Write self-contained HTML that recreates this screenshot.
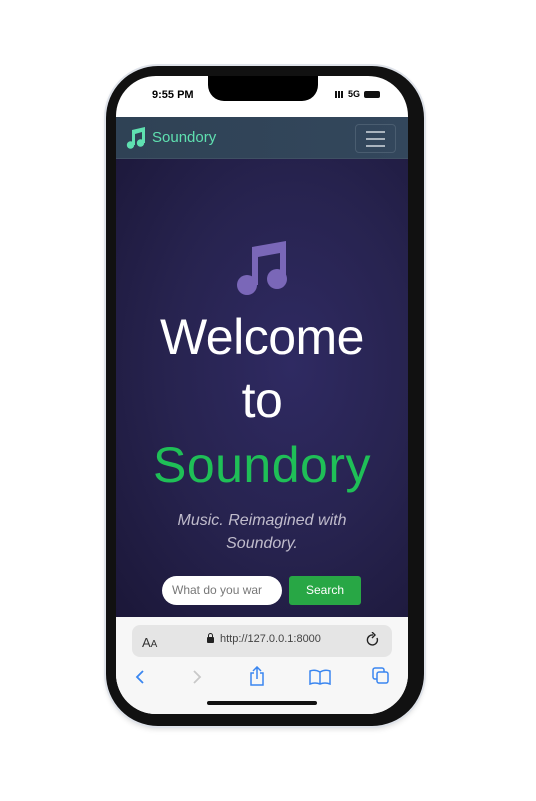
<!DOCTYPE html>
<html><head><meta charset="utf-8"><style>
*{margin:0;padding:0;box-sizing:border-box}
body{width:536px;height:801px;background:#fff;position:relative;overflow:hidden;font-family:"Liberation Sans",sans-serif}
.frame{position:absolute;left:106px;top:66px;width:318px;height:660px;border-radius:52px;background:#111;box-shadow:0 0 0 2px #dfe3ea,0 3px 6px rgba(0,0,0,.15)}
.screen{position:absolute;left:116px;top:76px;width:292px;height:638px;border-radius:40px;overflow:hidden;background:#fff}
.notch{position:absolute;left:92px;top:0;width:110px;height:25px;background:#000;border-radius:0 0 16px 16px}
.a{position:absolute}
.nav{left:0;top:41px;width:292px;height:42px;background:linear-gradient(90deg,#2f4255,#33475c);border-bottom:1px solid #3f5063}
.hero{left:0;top:83px;width:292px;height:458px;background:radial-gradient(ellipse at 60% 45%,#2f2a62 0%,#27234f 50%,#1b1738 100%)}
.w{width:292px;text-align:center;color:#fff;font-size:50px;letter-spacing:-0.5px;font-weight:normal;line-height:64px}
.bar{left:0;top:541px;width:292px;height:97px;background:#f7f7f7}
</style></head><body>
<div class="frame"></div>
<div class="screen">
 <div class="notch"></div>
 <div class="a" style="left:36px;top:13px;font-size:11px;font-weight:bold">9:55 PM</div>
 <div class="a" style="left:219px;top:15px;width:10px;height:7px;background:linear-gradient(90deg,#111 0 2px,transparent 2px 3px,#111 3px 5px,transparent 5px 6px,#111 6px 8px,transparent 8px)"></div>
 <div class="a" style="left:232px;top:13px;font-size:9px;font-weight:bold">5G</div>
 <div class="a" style="left:248px;top:15px;width:16px;height:7px;background:#111;border-radius:2px"></div>
 <div class="a nav">
  <svg class="a" style="left:10px;top:10px" width="20" height="22" viewBox="0 0 20 22"><path d="M6 3 L19 0 V16 H16 V5 L9 7 V18 H6 Z" fill="#5fe0b0"/><circle cx="4.5" cy="18" r="3.7" fill="#5fe0b0"/><circle cx="14.5" cy="16" r="3.7" fill="#5fe0b0"/></svg>
  <div class="a" style="left:36px;top:12px;color:#5fe0b0;font-size:15px">Soundory</div>
  <div class="a" style="left:239px;top:7px;width:41px;height:29px;border:1px solid #4a5d70;border-radius:4px"></div>
  <div class="a" style="left:250px;top:14px;width:19px;height:2px;background:#aab4be;box-shadow:0 7px 0 #aab4be,0 14px 0 #aab4be"></div>
 </div>
 <div class="a hero">
  <svg class="a" style="left:119px;top:82px" width="54" height="56" viewBox="0 0 54 56"><path d="M17 6 L51 0 V40 H45 V12 L23 16 V44 H17 Z" fill="#7a67b8"/><circle cx="12" cy="44" r="10" fill="#7a67b8"/><circle cx="42" cy="38" r="10" fill="#7a67b8"/></svg>
  <div class="a w" style="top:146px">Welcome</div>
  <div class="a w" style="top:209px">to</div>
  <div class="a w" style="top:274px;color:#1fbf57;letter-spacing:0.5px">Soundory</div>
  <div class="a" style="top:350px;left:40px;width:212px;text-align:center;color:#c0bccc;font-style:italic;font-size:16px;line-height:23px">Music. Reimagined with Soundory.</div>
  <div class="a" style="left:46px;top:417px;width:120px;height:29px;background:#fff;border-radius:15px;color:#777;font-size:12px;padding:7px 10px;white-space:nowrap;overflow:hidden">What do you war</div>
  <div class="a" style="left:173px;top:417px;width:72px;height:29px;background:#28a745;border-radius:3px;color:#fff;font-size:12px;text-align:center;line-height:29px">Search</div>
 </div>
 <div class="a bar">
  <div class="a" style="left:16px;top:8px;width:260px;height:32px;background:#e5e5e5;border-radius:8px"></div>
  <div class="a" style="left:26px;top:18px;font-size:13px;color:#333">A<span style="font-size:10px">A</span></div>
  <div class="a" style="left:91px;top:20px;width:7px;height:6px;background:#222;border-radius:1px"></div>
  <div class="a" style="left:92px;top:16px;width:5px;height:6px;border:1.3px solid #222;border-radius:3px 3px 0 0"></div>
  <div class="a" style="left:104px;top:16px;font-size:11px;color:#444">http://127.0.0.1:8000</div>
  <svg class="a" style="left:250px;top:15px" width="14" height="15" viewBox="0 0 14 15"><path d="M11 6 A5 5 0 1 1 7 3" fill="none" stroke="#222" stroke-width="1.4"/><path d="M6 0 L9 3 L6 6" fill="none" stroke="#222" stroke-width="1.4"/></svg>
  <svg class="a" style="left:18px;top:52px" width="12" height="16"><path d="M9 2 L3 8 L9 14" fill="none" stroke="#3a86f0" stroke-width="1.8"/></svg>
  <svg class="a" style="left:75px;top:52px" width="12" height="16"><path d="M3 2 L9 8 L3 14" fill="none" stroke="#c8c8c8" stroke-width="1.8"/></svg>
  <svg class="a" style="left:132px;top:49px" width="18" height="20"><path d="M6 7 H3 V19 H15 V7 H12 M9 13 V1 M5 5 L9 1 L13 5" fill="none" stroke="#3a86f0" stroke-width="1.5"/></svg>
  <svg class="a" style="left:193px;top:52px" width="22" height="16"><path d="M11 3 Q6 0 1 2 V15 Q6 13 11 15 Q16 13 21 15 V2 Q16 0 11 3 V15" fill="none" stroke="#3a86f0" stroke-width="1.5"/></svg>
  <svg class="a" style="left:256px;top:50px" width="18" height="18"><rect x="1" y="1" width="11" height="11" rx="2" fill="none" stroke="#3a86f0" stroke-width="1.5"/><rect x="5" y="5" width="11" height="11" rx="2" fill="#f7f7f7" stroke="#3a86f0" stroke-width="1.5"/></svg>
  <div class="a" style="left:91px;top:84px;width:110px;height:4px;background:#111;border-radius:2px"></div>
 </div>
</div>
</body></html>
